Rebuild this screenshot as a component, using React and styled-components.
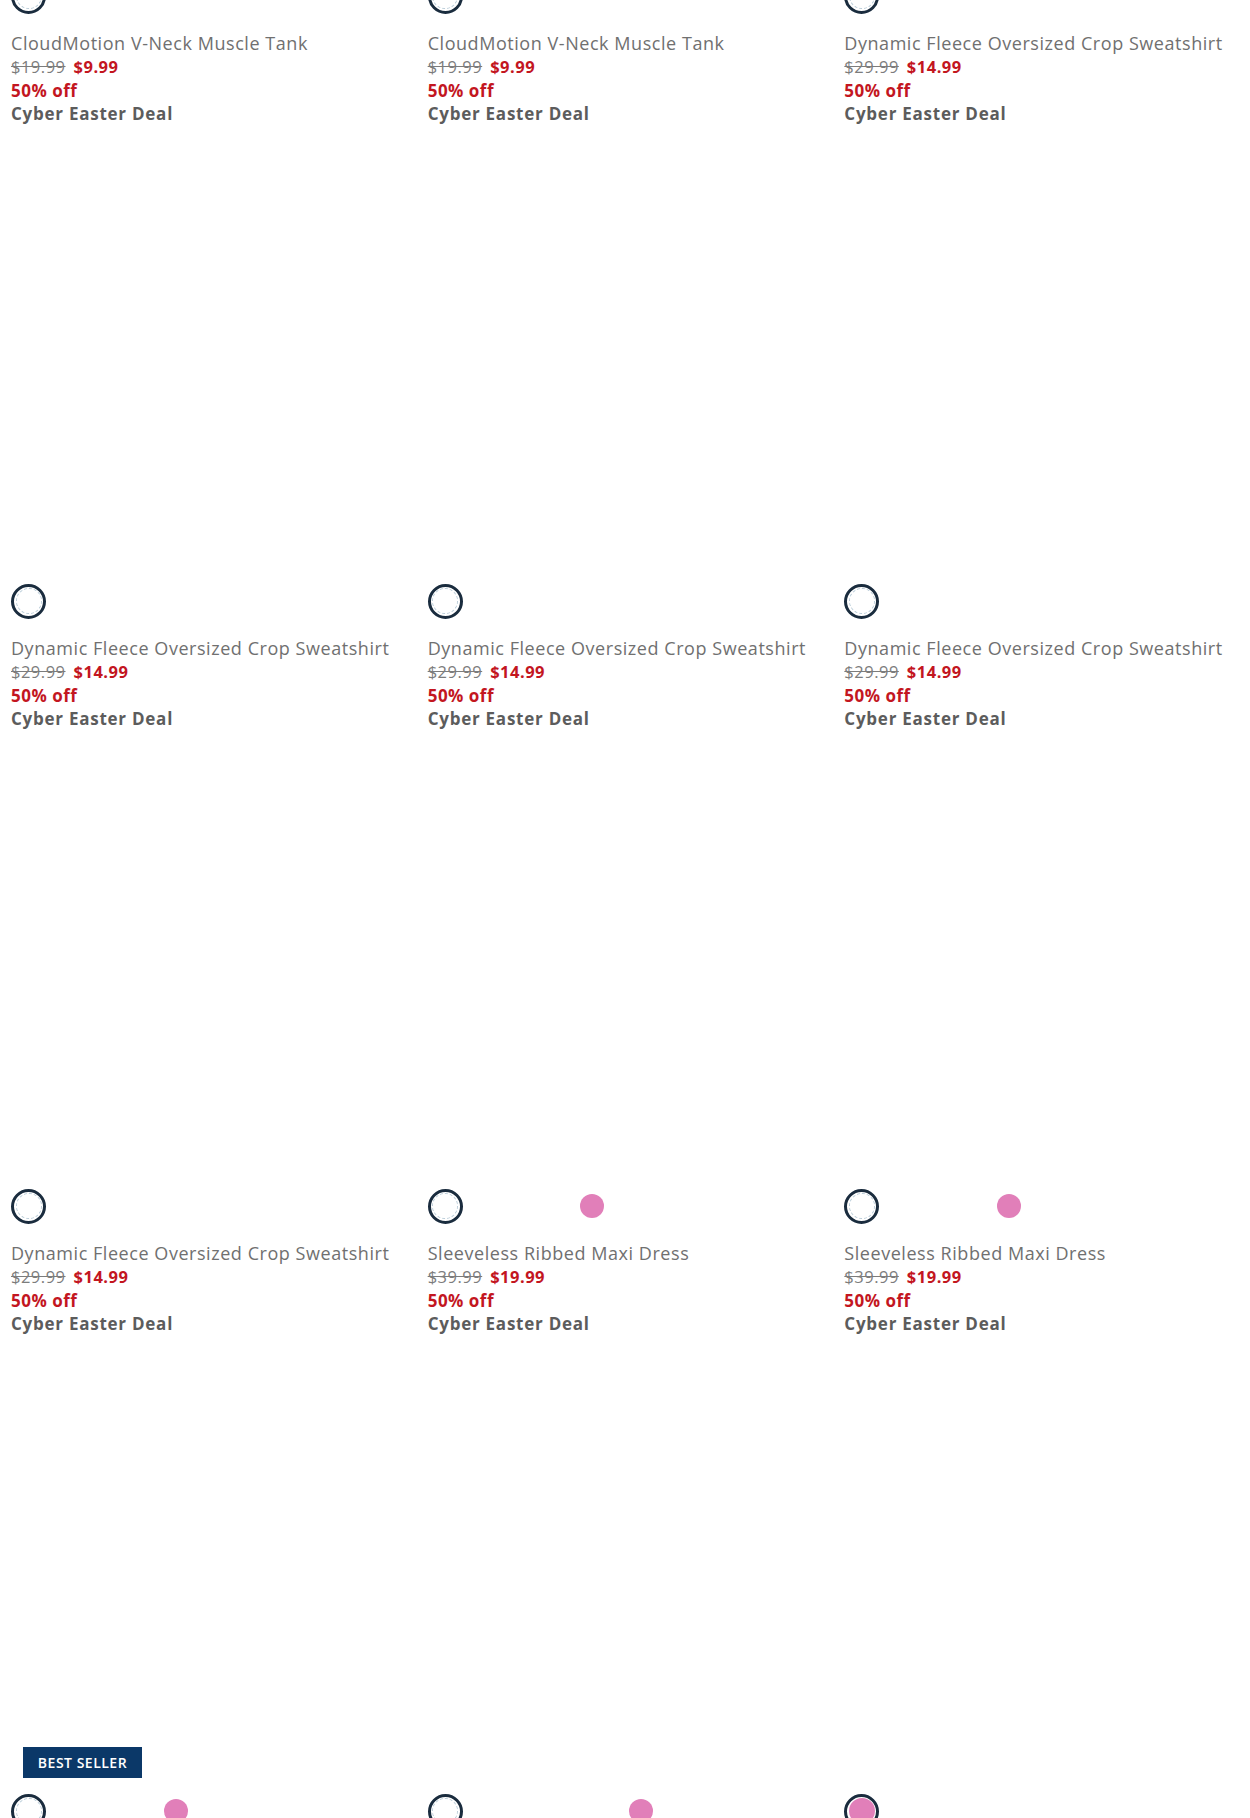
import React from 'react';
import styled, { createGlobalStyle } from 'styled-components';

const GlobalStyle = createGlobalStyle`
  html, body { margin: 0; padding: 0; background: #ffffff; }
  body { font-family: "Open Sans", "Liberation Sans", sans-serif; -webkit-font-smoothing: antialiased; }
`;

const Page = styled.div`
  width: 1250px;
  height: 1818px;
  overflow: hidden;
  background: #ffffff;
`;

const Grid = styled.div`
  display: grid;
  grid-template-columns: repeat(3, 1fr);
  margin-top: -449.5px;
`;

const Card = styled.div`
  display: flex;
  flex-direction: column;
  padding: 0 11px 30px;
  min-width: 0;
`;

const ImageArea = styled.div`
  position: relative;
  height: 418px;
  margin-bottom: 10px;
  background: #ffffff;
`;

const Badge = styled.div`
  position: absolute;
  left: 12px;
  bottom: 5.5px;
  width: 119px;
  height: 31px;
  background: #0b3868;
  color: #ffffff;
  font-size: 14px;
  font-weight: 600;
  letter-spacing: 0.5px;
  display: flex;
  align-items: center;
  justify-content: center;
`;

const Swatches = styled.div`
  display: flex;
  gap: 14px;
  height: 35px;
  margin-bottom: 18px;
`;

const Swatch = styled.div`
  width: 35px;
  height: 35px;
  box-sizing: border-box;
  border-radius: 50%;
  border: 3px solid ${(p) => (p.$selected ? '#1a2c3e' : 'transparent')};
  display: flex;
  align-items: center;
  justify-content: center;
  flex: none;
`;

const Dot = styled.div`
  width: ${(p) => (p.$selected ? 26 : 24)}px;
  height: ${(p) => (p.$selected ? 26 : 24)}px;
  box-sizing: border-box;
  border-radius: 50%;
  background: ${(p) => p.$color};
  border: ${(p) => (p.$color === '#ffffff' && p.$selected ? '1px dashed #b9ccd8' : 'none')};
`;

const Title = styled.div`
  font-size: 18px;
  line-height: 23.5px;
  color: #707070;
  letter-spacing: 0.55px;
  white-space: nowrap;
`;

const PriceRow = styled.div`
  font-size: 16.5px;
  line-height: 23.5px;
  display: flex;
  gap: 8px;
`;

const Was = styled.span`
  color: #7c7c7c;
  text-decoration: line-through;
  letter-spacing: 0.5px;
`;

const Now = styled.span`
  color: #c3161f;
  font-weight: 700;
  letter-spacing: 0.5px;
`;

const Off = styled.div`
  font-size: 17px;
  line-height: 23.5px;
  color: #c3161f;
  font-weight: 700;
  letter-spacing: 0.5px;
`;

const Deal = styled.div`
  font-size: 17px;
  line-height: 23.5px;
  color: #5c5c5c;
  font-weight: 700;
  letter-spacing: 0.75px;
`;

const W = '#ffffff';
const P = '#e17fb9';

const tank = { title: 'CloudMotion V-Neck Muscle Tank', was: '$19.99', now: '$9.99' };
const fleece = { title: 'Dynamic Fleece Oversized Crop Sweatshirt', was: '$29.99', now: '$14.99' };
const dress = { title: 'Sleeveless Ribbed Maxi Dress', was: '$39.99', now: '$19.99' };

const products = [
  { ...tank, swatches: [W], sel: 0 },
  { ...tank, swatches: [W], sel: 0 },
  { ...fleece, swatches: [W], sel: 0 },
  { ...fleece, swatches: [W], sel: 0 },
  { ...fleece, swatches: [W], sel: 0 },
  { ...fleece, swatches: [W], sel: 0 },
  { ...fleece, swatches: [W], sel: 0 },
  { ...dress, swatches: [W, W, W, P], sel: 0 },
  { ...dress, swatches: [W, W, W, P], sel: 0 },
  { ...dress, swatches: [W, W, W, P], sel: 0, badge: 'BEST SELLER' },
  { ...dress, swatches: [W, W, W, W, P], sel: 0 },
  { ...dress, swatches: [P, W, W, W], sel: 0 },
];

function ProductCard({ p }) {
  return (
    <Card>
      <ImageArea>{p.badge && <Badge>{p.badge}</Badge>}</ImageArea>
      <Swatches>
        {p.swatches.map((c, i) => (
          <Swatch key={i} $selected={i === p.sel}>
            <Dot $color={c} $selected={i === p.sel} />
          </Swatch>
        ))}
      </Swatches>
      <Title>{p.title}</Title>
      <PriceRow>
        <Was>{p.was}</Was>
        <Now>{p.now}</Now>
      </PriceRow>
      <Off>50% off</Off>
      <Deal>Cyber Easter Deal</Deal>
    </Card>
  );
}

export default function App() {
  return (
    <Page>
      <GlobalStyle />
      <Grid>
        {products.map((p, i) => (
          <ProductCard key={i} p={p} />
        ))}
      </Grid>
    </Page>
  );
}
